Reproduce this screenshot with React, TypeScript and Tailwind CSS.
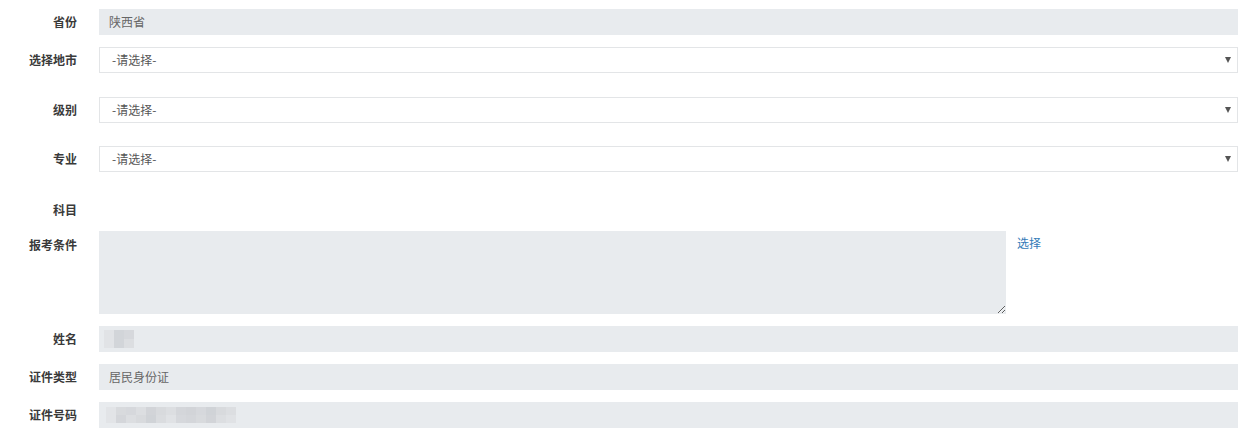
import React from "react";

const font = { fontFamily: '"Microsoft YaHei", "Noto Sans CJK SC", "Liberation Sans", sans-serif' };

function Label({ text, top }: { text: string; top?: boolean }) {
  return (
    <div
      className={`w-[77px] shrink-0 text-right text-[12px] font-bold text-[#3a3a3a] ${top ? "self-start pt-[5px]" : ""}`}
    >
      {text}
    </div>
  );
}

function ReadOnlyBox({ children }: { children?: React.ReactNode }) {
  return (
    <div className="ml-[22px] flex h-[26px] flex-1 items-center bg-[#e8ebee] px-[10px] text-[12px] text-[#666]">
      {children}
    </div>
  );
}

function SelectBox() {
  return (
    <div className="ml-[22px] flex h-[26px] flex-1 items-center justify-between border border-[#e3e5e7] bg-white pl-[12px] pr-[6px] text-[12px] text-[#555]">
      <span>-请选择-</span>
      <span className="h-0 w-0 border-x-[3.5px] border-t-[6px] border-x-transparent border-t-[#555]" />
    </div>
  );
}

// pixelated (mosaic) placeholders for hidden personal data
const nameCells = [
  ["#e1e3e6", "#d2d5d9", "#d6d8dc"],
  ["#e1e3e6", "#d2d5d9", "#dcdee1"],
];
const idCells = [
  ["#e2e4e7", "#d8dadd", "#d6d8dc", "#dcdee1", "#d2d4d8", "#d8dadd", "#dcdee1", "#d4d6da", "#d2d4d8", "#d6d8dc", "#d0d3d7", "#d8dadd", "#dcdee1"],
  ["#e2e4e7", "#d4d6da", "#dcdee1", "#d8dadd", "#d0d3d7", "#dadcdf", "#e0e2e5", "#d6d8dc", "#d4d6da", "#d8dadd", "#d2d4d8", "#dcdee1", "#e0e2e5"],
];

function Mosaic({ cells, w, h }: { cells: string[][]; w: number; h: number }) {
  return (
    <div className="flex flex-col">
      {cells.map((row, i) => (
        <div key={i} className="flex">
          {row.map((c, j) => (
            <div key={j} style={{ width: w, height: h, background: c }} />
          ))}
        </div>
      ))}
    </div>
  );
}

export default function App() {
  return (
    <div className="min-h-screen bg-white pt-[9px] pr-[8px]" style={font}>
      <div className="mb-[12px] flex h-[26px] items-center">
        <Label text="省份" />
        <ReadOnlyBox>陕西省</ReadOnlyBox>
      </div>
      <div className="mb-[24px] flex h-[26px] items-center">
        <Label text="选择地市" />
        <SelectBox />
      </div>
      <div className="mb-[23px] flex h-[26px] items-center">
        <Label text="级别" />
        <SelectBox />
      </div>
      <div className="mb-[25px] flex h-[26px] items-center">
        <Label text="专业" />
        <SelectBox />
      </div>
      <div className="mb-[8px] flex h-[26px] items-center">
        <Label text="科目" />
      </div>
      <div className="mb-[12px] flex h-[83px] items-start">
        <Label text="报考条件" top />
        <textarea
          readOnly
          className="ml-[22px] h-[83px] w-[907px] resize bg-[#e8ebee] outline-none"
        />
        <a className="ml-[11px] mt-[3px] cursor-pointer text-[12px] text-[#337ab7]">选择</a>
      </div>
      <div className="mb-[12px] flex h-[26px] items-center">
        <Label text="姓名" />
        <div className="ml-[22px] flex h-[26px] flex-1 items-center bg-[#e8ebee] pl-[5px]">
          <Mosaic cells={nameCells} w={10} h={9} />
        </div>
      </div>
      <div className="mb-[12px] flex h-[26px] items-center">
        <Label text="证件类型" />
        <ReadOnlyBox>居民身份证</ReadOnlyBox>
      </div>
      <div className="flex h-[26px] items-center">
        <Label text="证件号码" />
        <div className="ml-[22px] flex h-[26px] flex-1 items-center bg-[#e8ebee] pl-[7px]">
          <Mosaic cells={idCells} w={10} h={8} />
        </div>
      </div>
    </div>
  );
}
